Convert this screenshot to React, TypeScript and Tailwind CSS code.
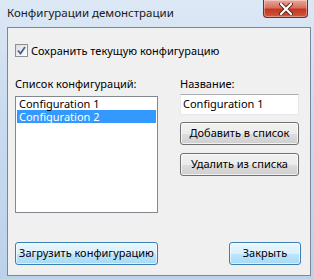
import React from "react";

const font = { fontFamily: '"Noto Sans", "Open Sans", sans-serif' };

function Btn({ children, blue, className = "" }: { children: React.ReactNode; blue?: boolean; className?: string }) {
  return (
    <div
      className={
        "h-[23px] rounded-[3px] border flex items-center justify-center text-[11px] text-black whitespace-nowrap " +
        (blue
          ? "border-[#3c7fb1] bg-[linear-gradient(to_bottom,#eaf6fd_0%,#d9f0fc_50%,#bee6fd_51%,#a7d9f5_100%)] shadow-[inset_0_0_0_1px_rgba(255,255,255,0.6)] "
          : "border-[#707070] bg-[linear-gradient(to_bottom,#f2f2f2_0%,#ebebeb_50%,#dddddd_51%,#cfcfcf_100%)] shadow-[inset_0_0_0_1px_rgba(255,255,255,0.7)] ") +
        className
      }
    >
      {children}
    </div>
  );
}

export default function App() {
  return (
    <div
      className="w-[314px] h-[279px] flex flex-col bg-[linear-gradient(to_bottom,#dde8f5,#c9dbef_40%,#bcd2ea)] overflow-hidden"
      style={font}
    >
      {/* title bar */}
      <div className="h-[27px] flex items-start">
        <div className="pl-[7px] pt-[5px] text-[11.5px] leading-[16px] text-[#1a1a1a] flex-1 whitespace-nowrap">Конфигурации демонстрации</div>
        <div className="mr-[6px] w-[45px] h-[18px] rounded-b-[4px] border border-t-0 border-[#7a2a20] bg-[linear-gradient(to_bottom,#e9a99b_0%,#d8705e_45%,#c3381f_55%,#d0593f_100%)] flex items-center justify-center shadow-[inset_0_0_0_1px_rgba(255,255,255,0.35)]">
          <svg width="14" height="12" viewBox="0 0 14 12">
            <path d="M2 1 L12 11 M12 1 L2 11" stroke="#5a2018" strokeWidth="4" strokeLinecap="round" />
            <path d="M2 1 L12 11 M12 1 L2 11" stroke="#ffffff" strokeWidth="2.2" strokeLinecap="round" />
          </svg>
        </div>
      </div>
      {/* client */}
      <div className="ml-[7px] mr-[3px] mb-[3px] flex-1 border border-[#7b8796] bg-[#f0f0f0] flex flex-col pl-[7px] pr-[9px]">
        <div className="mt-[16px] h-[13px] flex items-center gap-[3px]">
          <div className="w-[13px] h-[13px] border border-[#8f8f8f] bg-[linear-gradient(135deg,#dcdcdc,#ffffff)] flex items-center justify-center">
            <svg width="9" height="9" viewBox="0 0 9 9">
              <path d="M1 4.5 L3.5 7.5 L8 1" stroke="#4a5f97" strokeWidth="1.8" fill="none" />
            </svg>
          </div>
          <span className="text-[11px] leading-[15px] text-black whitespace-nowrap">Сохранить текущую конфигурацию</span>
        </div>
        <div className="mt-[19px] flex gap-[22px]">
          <div className="w-[143px] flex flex-col">
            <div className="text-[11px] leading-[15px] text-black">Список конфигураций:</div>
            <div className="mt-[5px] h-[117px] border border-[#828790] bg-white px-[1px] text-[11px] leading-none">
              <div className="h-[13px] flex items-center pl-[2px] text-black">Configuration 1</div>
              <div className="h-[13px] flex items-center pl-[2px] bg-[#3399ff] text-white">Configuration 2</div>
            </div>
          </div>
          <div className="w-[119px] flex flex-col">
            <div className="text-[11px] leading-[15px] text-black">Название:</div>
            <div className="mt-[3px] h-[21px] border border-[#e3e9ef] border-t-[#abadb3] bg-white flex items-center pl-[2px] text-[11px] text-black">
              Configuration 1
            </div>
            <Btn className="mt-[7px]">Добавить в список</Btn>
            <Btn className="mt-[8px]">Удалить из списка</Btn>
          </div>
        </div>
        <div className="mt-[29px] flex justify-between">
          <Btn blue className="w-[143px]">Загрузить конфигурацию</Btn>
          <Btn blue className="w-[72px]">Закрыть</Btn>
        </div>
      </div>
    </div>
  );
}
